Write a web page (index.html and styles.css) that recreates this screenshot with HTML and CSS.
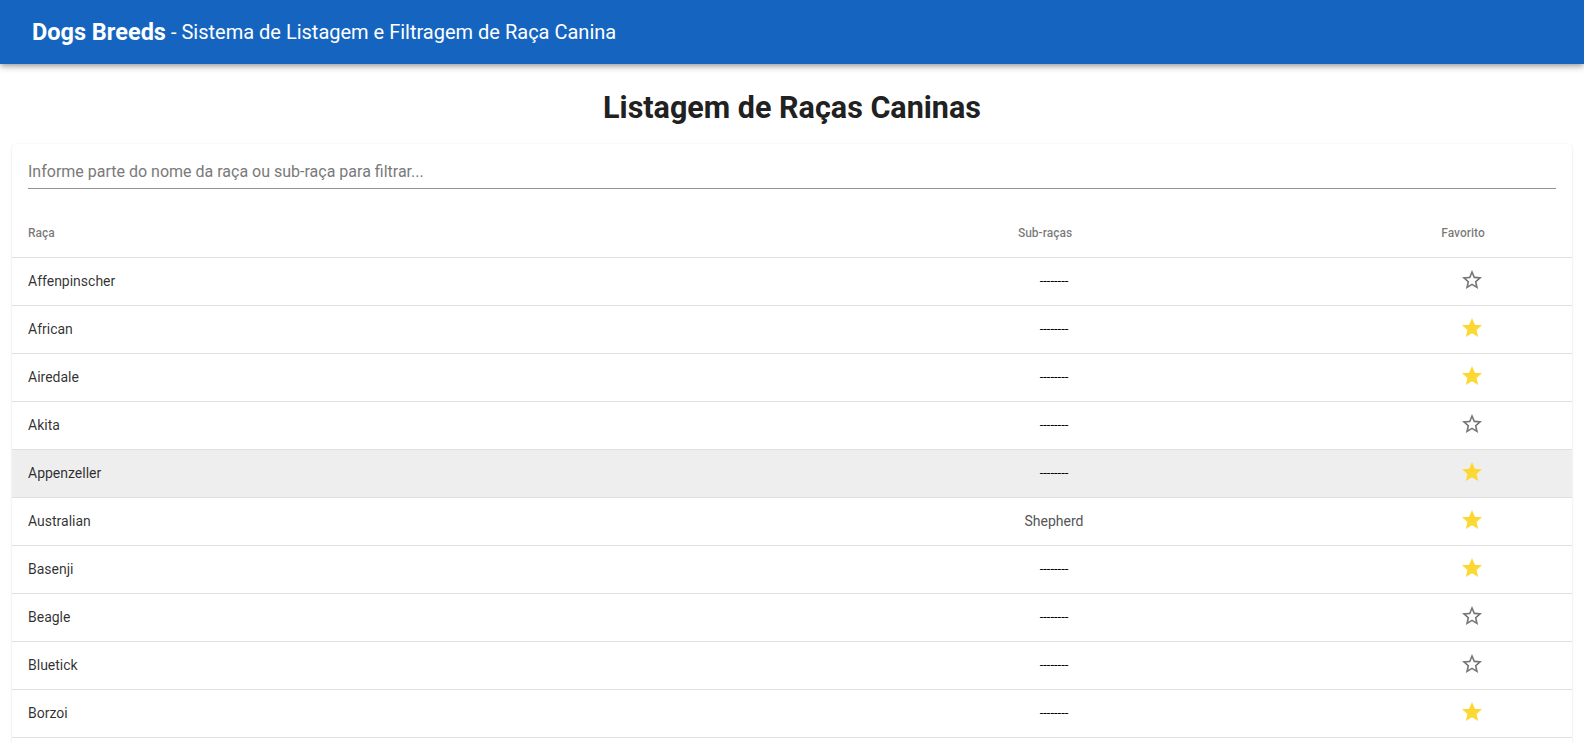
FILE: index.html
```html
<!DOCTYPE html>
<html lang="pt-BR">
<head>
<meta charset="utf-8">
<title>Dogs Breeds</title>
<link rel="stylesheet" href="styles.css">
</head>
<body>
<header class="toolbar">
  <span class="brand">Dogs Breeds</span>
  <span class="subtitle">- Sistema de Listagem e Filtragem de Raça Canina</span>
</header>
<main>
  <h1 class="page-title">Listagem de Raças Caninas</h1>
  <section class="card">
    <div class="filter">
      <input class="filter-input" type="text" placeholder="Informe parte do nome da raça ou sub-raça para filtrar...">
    </div>
    <div class="table">
      <div class="row head">
        <div class="cell c-name">Raça</div>
        <div class="cell c-sub"><span class="sort">Sub-raças</span></div>
        <div class="cell c-fav"><span class="sort">Favorito</span></div>
      </div>
      <div class="row"><div class="cell c-name">Affenpinscher</div><div class="cell c-sub dash">--------</div><div class="cell c-fav"><svg class="star off" viewBox="0 0 24 24"><path d="M22 9.24l-7.19-.62L12 2 9.19 8.63 2 9.24l5.46 4.73L5.82 21 12 17.27 18.18 21l-1.63-7.03L22 9.24zM12 15.4l-3.76 2.27 1-4.28-3.32-2.88 4.38-.38L12 6.1l1.71 4.04 4.38.38-3.32 2.88 1 4.28L12 15.4z"/></svg></div></div>
      <div class="row"><div class="cell c-name">African</div><div class="cell c-sub dash">--------</div><div class="cell c-fav"><svg class="star on" viewBox="0 0 24 24"><path d="M12 17.27L18.18 21l-1.64-7.03L22 9.24l-7.19-.61L12 2 9.19 8.63 2 9.24l5.46 4.73L5.82 21z"/></svg></div></div>
      <div class="row"><div class="cell c-name">Airedale</div><div class="cell c-sub dash">--------</div><div class="cell c-fav"><svg class="star on" viewBox="0 0 24 24"><path d="M12 17.27L18.18 21l-1.64-7.03L22 9.24l-7.19-.61L12 2 9.19 8.63 2 9.24l5.46 4.73L5.82 21z"/></svg></div></div>
      <div class="row"><div class="cell c-name">Akita</div><div class="cell c-sub dash">--------</div><div class="cell c-fav"><svg class="star off" viewBox="0 0 24 24"><path d="M22 9.24l-7.19-.62L12 2 9.19 8.63 2 9.24l5.46 4.73L5.82 21 12 17.27 18.18 21l-1.63-7.03L22 9.24zM12 15.4l-3.76 2.27 1-4.28-3.32-2.88 4.38-.38L12 6.1l1.71 4.04 4.38.38-3.32 2.88 1 4.28L12 15.4z"/></svg></div></div>
      <div class="row hover"><div class="cell c-name">Appenzeller</div><div class="cell c-sub dash">--------</div><div class="cell c-fav"><svg class="star on" viewBox="0 0 24 24"><path d="M12 17.27L18.18 21l-1.64-7.03L22 9.24l-7.19-.61L12 2 9.19 8.63 2 9.24l5.46 4.73L5.82 21z"/></svg></div></div>
      <div class="row"><div class="cell c-name">Australian</div><div class="cell c-sub">Shepherd</div><div class="cell c-fav"><svg class="star on" viewBox="0 0 24 24"><path d="M12 17.27L18.18 21l-1.64-7.03L22 9.24l-7.19-.61L12 2 9.19 8.63 2 9.24l5.46 4.73L5.82 21z"/></svg></div></div>
      <div class="row"><div class="cell c-name">Basenji</div><div class="cell c-sub dash">--------</div><div class="cell c-fav"><svg class="star on" viewBox="0 0 24 24"><path d="M12 17.27L18.18 21l-1.64-7.03L22 9.24l-7.19-.61L12 2 9.19 8.63 2 9.24l5.46 4.73L5.82 21z"/></svg></div></div>
      <div class="row"><div class="cell c-name">Beagle</div><div class="cell c-sub dash">--------</div><div class="cell c-fav"><svg class="star off" viewBox="0 0 24 24"><path d="M22 9.24l-7.19-.62L12 2 9.19 8.63 2 9.24l5.46 4.73L5.82 21 12 17.27 18.18 21l-1.63-7.03L22 9.24zM12 15.4l-3.76 2.27 1-4.28-3.32-2.88 4.38-.38L12 6.1l1.71 4.04 4.38.38-3.32 2.88 1 4.28L12 15.4z"/></svg></div></div>
      <div class="row"><div class="cell c-name">Bluetick</div><div class="cell c-sub dash">--------</div><div class="cell c-fav"><svg class="star off" viewBox="0 0 24 24"><path d="M22 9.24l-7.19-.62L12 2 9.19 8.63 2 9.24l5.46 4.73L5.82 21 12 17.27 18.18 21l-1.63-7.03L22 9.24zM12 15.4l-3.76 2.27 1-4.28-3.32-2.88 4.38-.38L12 6.1l1.71 4.04 4.38.38-3.32 2.88 1 4.28L12 15.4z"/></svg></div></div>
      <div class="row"><div class="cell c-name">Borzoi</div><div class="cell c-sub dash">--------</div><div class="cell c-fav"><svg class="star on" viewBox="0 0 24 24"><path d="M12 17.27L18.18 21l-1.64-7.03L22 9.24l-7.19-.61L12 2 9.19 8.63 2 9.24l5.46 4.73L5.82 21z"/></svg></div></div>
    </div>
  </section>
</main>
</body>
</html>
```
FILE: styles.css
```css
* { box-sizing: border-box; }
html, body { margin: 0; padding: 0; }
body {
  font-family: Roboto, "Helvetica Neue", sans-serif;
  color: rgba(0, 0, 0, 0.87);
  background: #fff;
}
.toolbar {
  position: relative;
  z-index: 2;
  height: 64px;
  background: #1565c0;
  color: #fff;
  display: flex;
  align-items: center;
  padding: 0 32px;
  box-shadow: 0 2px 4px -1px rgba(0,0,0,.2), 0 4px 5px 0 rgba(0,0,0,.14), 0 1px 10px 0 rgba(0,0,0,.12);
}
.brand {
  font-size: 23.5px;
  font-weight: 700;
  margin-right: 5px;
}
.subtitle {
  font-size: 20px;
  font-weight: 400;
}
.page-title {
  margin: 26px 0 19px;
  text-align: center;
  font-size: 30.5px;
  line-height: 35px;
  font-weight: 700;
  color: #212121;
}
.card {
  margin: 0 12px;
  padding-bottom: 24px;
  background: #fff;
  border-radius: 4px;
  box-shadow: 0 1px 3px rgba(0,0,0,.10), 0 0 1px rgba(0,0,0,.08);
}
.filter {
  padding: 17px 16px 0;
  margin-bottom: 13px;
}
.filter-input {
  display: block;
  width: 100%;
  height: 28px;
  padding: 0 0 7px;
  border: 0;
  border-bottom: 1px solid #949494;
  outline: none;
  font-family: inherit;
  font-size: 16px;
  line-height: 20px;
  color: rgba(0,0,0,.87);
  background: transparent;
}
.filter-input::placeholder { color: #7a7a7a; }
.row {
  display: grid;
  grid-template-columns: 1fr 636px 200px;
  height: 48px;
  padding-bottom: 2px;
  align-items: center;
  border-bottom: 1px solid #e0e0e0;
  font-size: 14px;
  color: rgba(0,0,0,.82);
}
.row.head {
  height: 56px;
  padding-top: 6px;
  padding-bottom: 0;
  font-size: 12px;
  font-weight: 500;
  color: rgba(0,0,0,.54);
}
.row.hover { background: #eeeeee; }
.cell.c-name { padding-left: 16px; }
.cell.c-sub, .cell.c-fav {
  text-align: center;
  display: flex;
  justify-content: center;
  align-items: center;
}
.row:not(.head) .c-sub { color: #555; }
.dash { color: #000 !important; font-size: 13px; }
.sort { margin-right: 18px; }
.star { width: 24px; height: 24px; display: block; margin-bottom: 2px; }
.star.on { fill: #fdd835; }
.star.off { fill: #757575; }
```
